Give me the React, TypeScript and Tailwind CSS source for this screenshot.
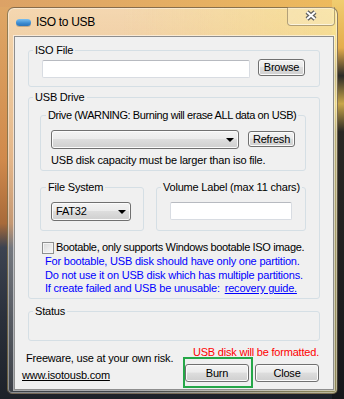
import React from 'react';

// Win7 classic themed push button look
const BTN =
    'flex items-center justify-center rounded-[3px] border border-[#707070] text-black bg-[linear-gradient(to_bottom,#f3f3f3_0%,#ebebeb_45%,#dddddd_50%,#cfcfcf_100%)] shadow-[inset_0_0_0_1px_#fbfbfb]';

function Button({ label, className = '' }: { label: string; className?: string }) {
    return (
        <button type="button" className={`${BTN} ${className}`}>
            {label}
        </button>
    );
}

function Combo({ value = '', className = '' }: { value?: string; className?: string }) {
    return (
        <div className={`${BTN} !justify-between pl-[4px] pr-[4px] ${className}`}>
            <span>{value}</span>
            <svg width="8" height="4" viewBox="0 0 8 4">
                <path d="M0 0H8L4 4Z" fill="#000" />
            </svg>
        </div>
    );
}

function TextBox({ className = '' }: { className?: string }) {
    return (
        <div
            className={`h-[18px] bg-white rounded-[2px] border border-[#d8dce2] border-t-[#b7bac0] ${className}`}
        />
    );
}

function Group({
    title,
    className = '',
    legend = 'ml-[4px]',
    children,
}: {
    title: string;
    className?: string;
    legend?: string;
    children?: React.ReactNode;
}) {
    return (
        <fieldset className={`border border-[#d5dfe5] rounded-[3px] ${className}`}>
            <legend className={`${legend} px-[2px] leading-[13px] whitespace-nowrap text-black`}>{title}</legend>
            {children}
        </fieldset>
    );
}

export default function App() {
    return (
        <div className="w-[344px] h-[399px] overflow-hidden pt-[7px] pl-[7px] font-['Liberation_Sans',Arial,sans-serif] text-[11px] tracking-[-0.2px] [background:linear-gradient(to_bottom,#f0cd70_0%,#e4ad4c_12%,#2b2a27_19%,#c8a64a_26%,#2a2824_33%,#16171b_100%)_right_top/12px_100%_no-repeat,linear-gradient(to_right,#dca266,#e6b062_60%,#eebb5c)_left_top/100%_7px_no-repeat,linear-gradient(to_bottom,#dfa867_0%,#d08a4c_40%,#a86a3a_56%,#3c4351_62%,#2a303b_80%,#1d2129_100%)]">
            {/* window frame */}
            <div className="w-[331px] h-[387px] rounded-t-[7px] rounded-b-[5px] border border-[#4a3c2c]/60 shadow-[inset_0_0_0_1px_rgba(255,255,255,0.4)] [background:linear-gradient(to_right,rgba(255,240,200,0)_35%,rgba(250,232,120,0.45)_100%),linear-gradient(to_bottom,rgba(255,240,215,0.66)_0%,rgba(255,238,210,0.55)_20%,rgba(255,250,240,0.3)_60%,rgba(255,255,255,0.14)_100%)]">
                {/* title bar */}
                <div className="flex items-start h-[28px] pl-[8px] pr-[2px]">
                    <div className="mt-[11px] w-[15px] h-[7px] rounded-full bg-[linear-gradient(to_bottom,#7cc0f0,#3a8ad0_60%,#2d74b8)] shadow-[0_1px_0_rgba(0,0,0,0.2)]" />
                    <span className="ml-[5px] mt-[7px] text-[12px] leading-[15px] tracking-[-0.3px] text-black">
                        ISO to USB
                    </span>
                    <div className="ml-auto flex items-center justify-center w-[48px] h-[19px] -mt-px rounded-b-[4px] border border-t-0 border-[#6f5e45]/50 bg-white/20 shadow-[inset_0_-1px_0_rgba(255,255,255,0.6)]">
                        <svg width="14" height="11" viewBox="0 0 14 11" className="-mt-[2px]">
                            <path d="M3 2L11 9M11 2L3 9" stroke="#5f5f5f" strokeWidth="4.4" />
                            <path d="M3 2L11 9M11 2L3 9" stroke="#ffffff" strokeWidth="2" />
                        </svg>
                    </div>
                </div>

                {/* client area */}
                <div className="ml-[6px] w-[320px] h-[354px] bg-[#f0f0f0] border border-[#8e8e8e] shadow-[0_0_0_1px_rgba(255,255,255,0.55)]">
                    <div className="pt-[7px] pl-[13px]">
                        <Group title="ISO File" className="w-[292px] h-[43px]">
                            <div className="flex items-start gap-[8px] pt-[3px] pl-[13px]">
                                <TextBox className="w-[208px]" />
                                <Button label="Browse" className="w-[47px] h-[17px] -mt-px" />
                            </div>
                        </Group>

                        <Group title="USB Drive" className="mt-[4px] w-[292px] h-[208px]">
                            <div className="pl-[11px]">
                                <Group
                                    title="Drive (WARNING: Burning will erase ALL data on USB)"
                                    legend="ml-[5px] tracking-[-0.4px]"
                                    className="mt-[5px] w-[266px] h-[62px]"
                                >
                                    <div className="pt-[8px] pl-[10px]">
                                        <div className="flex items-start gap-[9px]">
                                            <Combo className="w-[188px] h-[19px]" />
                                            <Button label="Refresh" className="w-[47px] h-[16px] mt-px" />
                                        </div>
                                        <p className="mt-[5px] leading-[13px] text-black">
                                            USB disk capacity must be larger than iso file.
                                        </p>
                                    </div>
                                </Group>

                                <div className="mt-[10px] flex gap-[12px]">
                                    <Group title="File System" legend="ml-[5px]" className="w-[104px] h-[50px]">
                                        <div className="pt-[8px] pl-[10px]">
                                            <Combo value="FAT32" className="w-[80px] h-[19px]" />
                                        </div>
                                    </Group>
                                    <Group title="Volume Label (max 11 chars)" className="w-[150px] h-[50px]">
                                        <div className="pt-[8px] pl-[13px]">
                                            <TextBox className="w-[122px]" />
                                        </div>
                                    </Group>
                                </div>

                                <div className="mt-[10px] ml-[2px] flex items-center gap-[2px] h-[13px]">
                                    <div className="w-[12px] h-[12px] border border-[#8e8f8f] bg-[linear-gradient(135deg,#d9d9d9,#f8f8f8)] shadow-[inset_0_0_0_1px_#f4f4f4]" />
                                    <span className="leading-[13px] tracking-[-0.35px] text-black">
                                        Bootable, only supports Windows bootable ISO image.
                                    </span>
                                </div>

                                <div className="mt-px ml-[5px] leading-[13.5px] text-[#0000ff]">
                                    <p>For bootable, USB disk should have only one partition.</p>
                                    <p>Do not use it on USB disk which has multiple partitions.</p>
                                    <p>
                                        If create failed and USB be unusable:{' '}
                                        <span className="ml-[2px] underline">recovery guide.</span>
                                    </p>
                                </div>
                            </div>
                        </Group>

                        <Group title="Status" className="mt-[6px] w-[292px] h-[36px]" />
                    </div>

                    {/* footer */}
                    <div className="flex justify-between pl-[7px] pr-[14px]">
                        <div className="leading-[13px] text-black">
                            <p className="mt-[10.5px] ml-[4px]">Freeware, use at your own risk.</p>
                            <p className="mt-[4px] underline">www.isotousb.com</p>
                        </div>
                        <div className="flex flex-col items-end">
                            <p className="mt-[4.5px] leading-[13px] text-[#ff0000]">USB disk will be formatted.</p>
                            <div className="mt-[5.5px] flex gap-[6px]">
                                <div className="relative">
                                    <Button label="Burn" className="w-[64px] h-[18px]" />
                                    <span className="absolute left-[-2px] right-[-4px] top-[-7px] bottom-[-6px] border-2 border-[#25a748] pointer-events-none" />
                                </div>
                                <Button label="Close" className="w-[64px] h-[18px]" />
                            </div>
                        </div>
                    </div>
                </div>
            </div>
        </div>
    );
}
